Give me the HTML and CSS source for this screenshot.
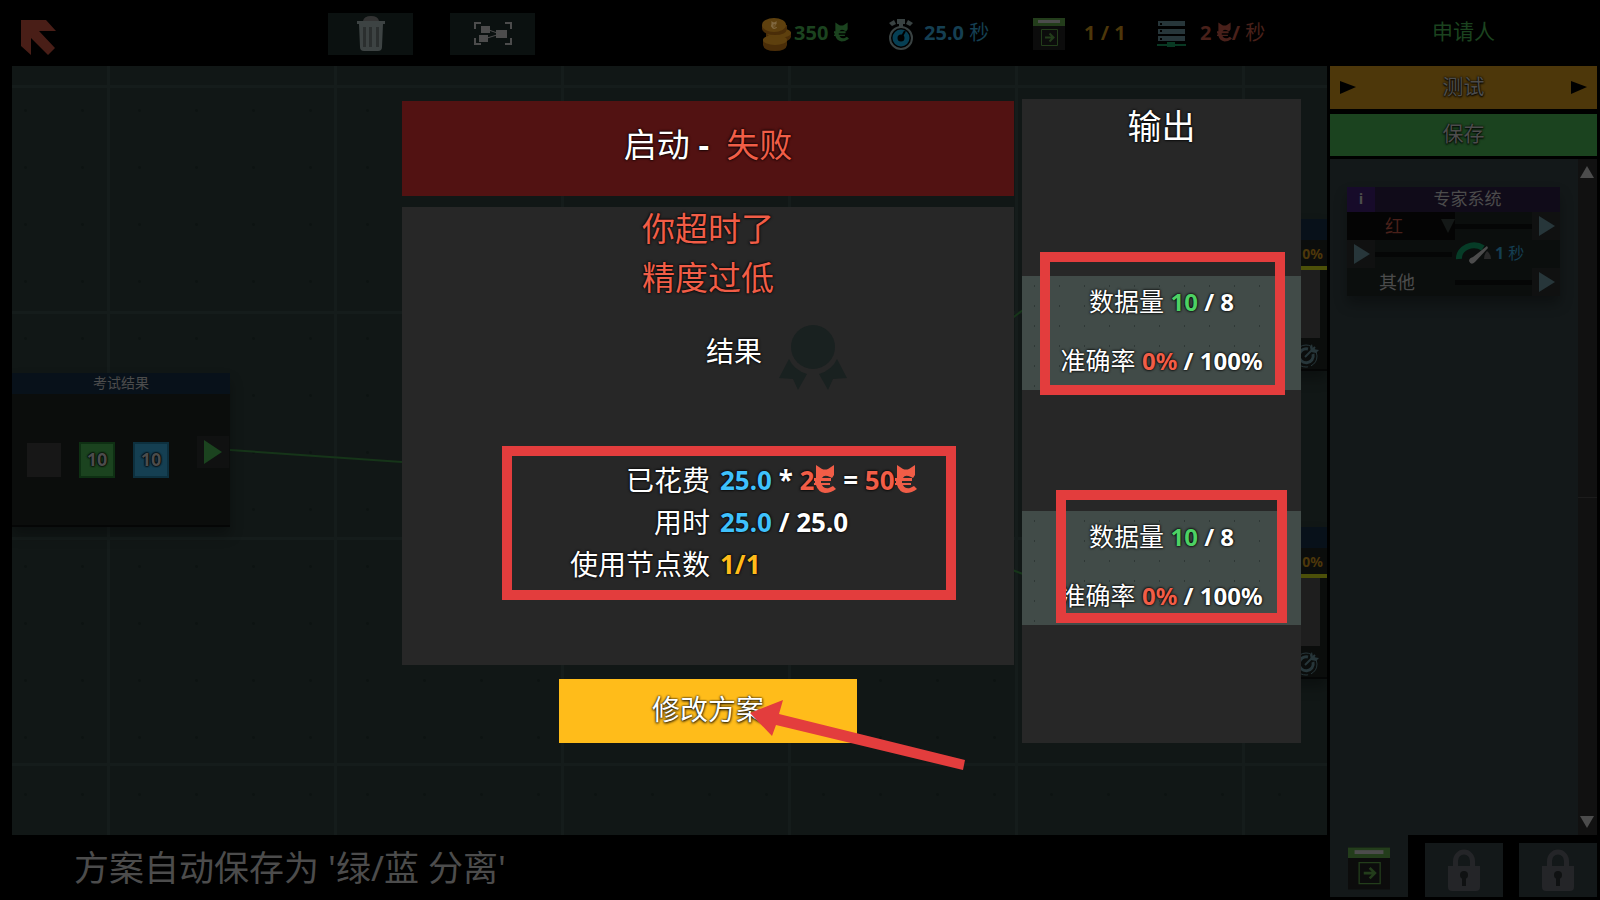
FILE: index.html
```
<!DOCTYPE html>
<html lang="zh-CN">
<head>
    <meta charset="UTF-8">
    <meta name="viewport" content="width=device-width, initial-scale=1.0">
    <title>启动 - 失败</title>
    <link rel="stylesheet" href="styles.css">
</head>
<body>
    <svg class="defs" aria-hidden="true">
        <symbol id="coin" viewBox="0 0 22 28">
            <path fill="currentColor" d="M2 0 L8 4 Q11 5 14 4 L20 0 L20 10 L18 13 L16 12 Q10 9 8 13 H17 V16 H7 V18 H16 V20 H8 Q10 24 15 23 L19 21 L22 24 Q17 28 11 28 Q4 27 2 20 H0 V18 H1 V16 H0 V13 H2 Q2 10 2 8 Z"/>
        </symbol>
        <symbol id="node" viewBox="0 0 32 32">
            <path fill="#0c0c0c" d="M0 0h32v32H0z"/>
            <path fill="#233d1b" d="M0 0h32v8H0z"/>
            <path fill="#4c4c4c" d="M5 2h22v3H5z"/>
            <path fill="none" stroke="#233d1b" d="M8.500 11.500h16v16h-16z"/>
            <path fill="none" stroke="#233d1b" stroke-width="2" d="M12 19.500h8M16.500 15.500l4 4-4 4"/>
        </symbol>
        <symbol id="lock" viewBox="0 0 32 42">
            <path fill="none" stroke="#242528" stroke-width="5" d="M7.500 20v-8a8.500 9 0 0 1 17 0v8"/>
            <path fill="#242528" d="M0 17h32v21q0 4-4 4H4q-4 0-4-4z"/>
            <circle cx="16" cy="26" r="4" fill="#0f1112"/>
            <path fill="#0f1112" d="M14 27h4v10h-4z"/>
        </symbol>
        <symbol id="target" viewBox="0 0 28 28">
            <circle cx="13" cy="15" r="11" fill="none" stroke="#27363a" stroke-width="1" stroke-dasharray="12 3"/>
            <path fill="none" stroke="#27363a" stroke-width="3" d="M15 8a7 7 0 1 0 5 5"/>
            <path fill="none" stroke="#27363a" stroke-width="2" d="M12 16L22 6"/>
            <path fill="#27363a" d="M19 3l1 5 6 1-3 3-5-1-1-5z"/>
        </symbol>
    </svg>

    <div class="game">
        <header class="topbar">
            <button class="back" type="button" aria-label="返回">
                <svg width="36" height="36" viewBox="0 0 36 36"><path fill="#491e17" d="M0 0h25l10 11H18l16 17-7 7-17-17v17L0 26z"/></svg>
            </button>
            <div class="tools">
                <button class="tool" type="button" aria-label="删除">
                    <svg width="30" height="36" viewBox="0 0 30 36">
                        <path fill="#333" d="M7 5q1-5 8-5t8 5z"/>
                        <path fill="#3d4343" d="M1 5h28v3H1zM3 8h24l-1 23q0 4-4 4H8q-4 0-4-4z"/>
                        <path fill="#2b2f2f" d="M7 11h3v20H7zM13 11h3v20h-3zM20 11h3v20h-3z"/>
                    </svg>
                </button>
                <button class="tool" type="button" aria-label="居中视图">
                    <svg width="38" height="24" viewBox="0 0 38 24">
                        <path fill="none" stroke="#4c4c4c" stroke-width="2" d="M1 7V1h6M31 1h6v6M37 16v6h-6M7 22H1v-6"/>
                        <path fill="none" stroke="#4c4c4c" d="M12 7l14 5-16 5"/>
                        <path fill="#4c4c4c" d="M7 4h9v7H7zM5 13h9v7H5zM22 8h11v8H22z"/>
                    </svg>
                </button>
            </div>
            <div class="stats">
                <span class="stat money green">
                    <svg width="29" height="33" viewBox="0 0 29 33">
                        <path fill="#4a2d08" d="M1 21h24v6q-1 6-12 6T1 27zM4 14h25v5q-1 5-12 5T4 20z"/>
                        <ellipse cx="13" cy="22" rx="12" ry="5" fill="#5e400e"/>
                        <ellipse cx="17" cy="15" rx="12" ry="5" fill="#5e400e"/>
                        <path fill="#4a2d08" d="M0 7h25v4q-1 6-12 6T0 11z"/>
                        <ellipse cx="12" cy="7" rx="12" ry="7" fill="#5e400e"/>
                        <use href="#coin" x="8" y="3" width="8" height="8" color="#806840"/>
                    </svg>
                    <span>350 <svg class="coin"><use href="#coin"/></svg></span>
                </span>
                <span class="stat time blue">
                    <svg width="26" height="33" viewBox="0 0 26 33">
                        <circle cx="13" cy="20" r="11" fill="none" stroke="#394242" stroke-width="2"/>
                        <circle cx="13" cy="20" r="6" fill="none" stroke="#063f54" stroke-width="5"/>
                        <path stroke="#000" stroke-width="2" d="M13 20l4-7"/>
                        <path fill="#394242" d="M9 1h8v5H9zM1 5l5-3 2 4-4 2zM25 5l-5-3-2 4 4 2zM11 6h4v3h-4z"/>
                    </svg>
                    <span>25.0 <span class="unit">秒</span></span>
                </span>
                <span class="stat nodes yellow">
                    <svg width="32" height="32"><use href="#node"/></svg>
                    <span>1 / 1</span>
                </span>
                <span class="stat cost red">
                    <svg width="29" height="28" viewBox="0 0 29 28">
                        <path fill="#27363a" d="M1 1h27v5H1zM1 9h27v5H1zM1 16h27v5H1z"/>
                        <path fill="#000" d="M3 3h2v2H3zM3 10h2v2H3zM3 18h2v2H3z"/>
                        <path fill="#083923" d="M0 24h29v2H0zM10 22h8v5h-8z"/>
                    </svg>
                    <span>2 <svg class="coin"><use href="#coin"/></svg>/ <span class="unit">秒</span></span>
                </span>
            </div>
            <div class="applicant green">申请人</div>
        </header>

        <main class="board">
            <svg class="wires" width="100%" height="100%">
                <path fill="none" stroke="#163519" stroke-width="2" d="M218 384L390 396M990 260L1011 244M990 500L1011 508"/>
            </svg>
            <section class="card source">
                <h3>考试结果</h3>
                <div class="card-body">
                    <span class="chip empty"></span>
                    <span class="chip chip-green">10</span>
                    <span class="chip chip-blue">10</span>
                    <span class="port"><svg width="18" height="24"><path fill="#1b431f" d="M0 0l18 12L0 24z"/></svg></span>
                </div>
            </section>
            <section class="card sink sink-top">
                <h3></h3>
                <div class="percent">0%</div>
                <div class="slot"></div>
                <svg class="target"><use href="#target"/></svg>
            </section>
            <section class="card sink sink-bottom">
                <h3></h3>
                <div class="percent">0%</div>
                <div class="slot"></div>
                <svg class="target"><use href="#target"/></svg>
            </section>
        </main>

        <aside class="sidebar">
            <button class="run" type="button">
                <svg width="16" height="13"><path d="M0 0l16 6L0 13z"/></svg>
                <span>测试</span>
                <svg width="16" height="13"><path d="M0 0l16 6L0 13z"/></svg>
            </button>
            <button class="save" type="button"><span>保存</span></button>
            <div class="library">
                <div class="library-list">
                    <section class="expert">
                        <h3><span class="info">i</span><span>专家系统</span></h3>
                        <div class="expert-row">
                            <div class="picker">
                                <select aria-label="颜色"><option>红</option></select>
                                <svg width="14" height="14"><path fill="#141817" d="M0 0h14L7 14z"/></svg>
                            </div>
                            <span class="rail"></span>
                            <span class="mini-port"></span>
                        </div>
                        <div class="expert-row">
                            <span class="mini-port"></span>
                            <span class="rail"></span>
                            <span class="speed blue">
                                <svg width="36" height="24" viewBox="0 0 36 24">
                                    <path fill="none" stroke="#063c27" stroke-width="6" d="M3 17a15 13 0 0 1 24-11"/>
                                    <path fill="#292929" d="M28 17q0-5 3-8 4 3 4 8z"/>
                                    <path fill="#4c4c4c" d="M31 4l1 2-13 14q-4 4-6-1 0-3 4-4z"/>
                                </svg>
                                <span><b>1</b> 秒</span>
                            </span>
                        </div>
                        <div class="expert-row">
                            <span class="other">其他</span>
                            <span class="rail"></span>
                            <span class="mini-port"></span>
                        </div>
                    </section>
                </div>
                <div class="scroll">
                    <svg width="14" height="12"><path fill="#4c4c4c" d="M7 0l7 12H0z"/></svg>
                    <svg width="14" height="12"><path fill="#4c4c4c" d="M0 0h14L7 12z"/></svg>
                </div>
            </div>
        </aside>

        <footer class="message">方案自动保存为 '绿/蓝 分离'</footer>
        <nav class="tabs">
            <button class="tab active" type="button" aria-label="节点"><svg width="42" height="43"><use href="#node"/></svg></button>
            <button class="tab" type="button" aria-label="未解锁"><svg width="32" height="42"><use href="#lock"/></svg></button>
            <button class="tab" type="button" aria-label="未解锁"><svg width="32" height="42"><use href="#lock"/></svg></button>
        </nav>
    </div>

    <div class="overlay" role="dialog" aria-label="启动 - 失败">
        <div class="report">
            <h1>启动 <b>-</b>&nbsp; <span class="bad">失败</span></h1>
            <div class="report-body">
                <p class="bad">你超时了<br>精度过低</p>
                <div class="result">
                    <h2>结果</h2>
                    <svg width="68" height="65" viewBox="0 0 68 65">
                        <g fill="#192120">
                            <circle cx="34" cy="22" r="22"/>
                            <path d="M10 34q5 11 18 15l-9 16-5-11-14-1zM58 34q-5 11-18 15l9 16 5-11 14-1z"/>
                        </g>
                    </svg>
                </div>
                <div class="summary">
                    <table>
                        <tr>
                            <th>已花费</th>
                            <td><span class="sky">25.0</span> * <span class="bad">2<svg class="coin"><use href="#coin"/></svg></span> = <span class="bad">50<svg class="coin"><use href="#coin"/></svg></span></td>
                        </tr>
                        <tr>
                            <th>用时</th>
                            <td><span class="sky">25.0</span> / 25.0</td>
                        </tr>
                        <tr>
                            <th>使用节点数</th>
                            <td class="gold">1/1</td>
                        </tr>
                    </table>
                </div>
            </div>
            <div class="action">
                <button class="modify" type="button">修改方案</button>
                <svg class="pointer" width="216" height="72" viewBox="0 0 216 72">
                    <path fill="#e33d3d" d="M0 13L33 0l-4 14 186 46-2 10-187-45-4 11z"/>
                </svg>
            </div>
        </div>
        <section class="outputs">
            <h2>输出</h2>
            <div class="output">
                <p>数据量 <b><span class="good">10</span> / 8</b></p>
                <p>准确率 <b><span class="bad">0%</span> / 100%</b></p>
                <span class="mark mark-first"></span>
            </div>
            <div class="output">
                <p>数据量 <b><span class="good">10</span> / 8</b></p>
                <p>准确率 <b><span class="bad">0%</span> / 100%</b></p>
                <span class="mark mark-second"></span>
            </div>
        </section>
    </div>
</body>
</html>
```

FILE: styles.css
```
* {
    box-sizing: border-box;
}

body {
    margin: 0;
    background: #000;
    color: #4c4c4c;
    font-family: "Noto Sans", "Noto Sans CJK SC", sans-serif;
    font-size: 20px;
    overflow: hidden;
}

h1, h2, h3, p {
    margin: 0;
    font-weight: normal;
}

button {
    border: none;
    padding: 0;
    color: inherit;
    font: inherit;
    cursor: pointer;
}

svg {
    flex: none;
}

.defs {
    position: absolute;
    width: 0;
    height: 0;
}

.green { color: #1b431f; }
.blue { color: #153f52; }
.yellow { color: #4d370a; }
.red { color: #49201a; }
.good { color: #4dd164; }
.bad { color: #f15d47; }
.sky { color: #3fc1fc; }
.gold { color: #ffbc1a; }

.game {
    display: grid;
    grid-template-columns: minmax(0, 1fr) 267px;
    grid-template-rows: 66px 1fr 65px;
    column-gap: 3px;
    height: 100vh;
    padding: 0 3px 0 12px;
}

/* top bar */
.topbar {
    grid-column: 1 / 3;
    display: flex;
    align-items: center;
}

.back {
    display: flex;
    margin: 10px 0 0 9px;
    background: none;
}

.tools {
    display: flex;
    gap: 37px;
    margin: 2px 0 0 271px;
}

.tool {
    display: flex;
    align-items: center;
    justify-content: center;
    width: 85px;
    height: 42px;
    background: #0b1110;
}

.stats {
    display: flex;
    margin: 2px 0 0 227px;
    font-weight: bold;
    line-height: 28px;
    white-space: nowrap;
}

.stat {
    display: flex;
    align-items: center;
}

.stat > span {
    padding-bottom: 3px;
}

.stat .coin {
    width: 15px;
    height: 20px;
    vertical-align: -2px;
}

.unit {
    font-weight: normal;
}

.money { width: 126px; gap: 3px; }
.time { width: 145px; gap: 10px; }
.nodes { width: 124px; gap: 19px; }
.cost { gap: 14px; }

.applicant {
    width: 267px;
    margin-left: auto;
    padding-bottom: 7px;
    font-size: 21px;
    text-align: center;
}

/* board */
.board {
    position: relative;
    overflow: hidden;
    background-color: #111716;
    background-image:
        linear-gradient(#151c1b 3px, transparent 3px),
        linear-gradient(90deg, #151c1b 3px, transparent 3px),
        radial-gradient(circle, #0d1312 1px, transparent 2px);
    background-size: 226px 226px, 227px 227px, 57px 57px;
    background-position: 0 19px, 95px 0, 42px 16px;
}

.wires {
    position: absolute;
    inset: 0;
}

.card {
    position: absolute;
    background: #0b0d0c;
    box-shadow: 0 8px 12px rgba(0, 0, 0, 0.3);
}

.card h3 {
    height: 21px;
    background: #08111a;
    font-size: 14px;
    line-height: 20px;
    text-align: center;
}

.source {
    left: 0;
    top: 307px;
    width: 218px;
    height: 154px;
    border-bottom: 2px solid #050606;
}

.card-body {
    display: flex;
    align-items: center;
    padding: 40px 0 0 15px;
}

.chip {
    width: 36px;
    height: 36px;
    margin: 8px 18px 0 0;
    border: 2px solid #0e3013;
    font-size: 18px;
    font-weight: bold;
    line-height: 30px;
    text-align: center;
    text-shadow: 0 0 2px #000, 0 0 2px #000, 0 0 2px #000;
}

.empty {
    width: 34px;
    height: 34px;
    border: none;
    background: #171717;
}

.chip-green {
    background: #1b431f;
}

.chip-blue {
    margin-right: 28px;
    background: #153f52;
    border-color: #0d303f;
}

.port {
    display: flex;
    align-items: center;
    justify-content: center;
    width: 32px;
    height: 32px;
    margin-bottom: 8px;
    background: #101111;
}

.sink {
    right: 0;
    width: 60px;
    height: 152px;
    border-bottom: 2px solid #050606;
}

.sink-top { top: 153px; }
.sink-bottom { top: 461px; }

.percent {
    height: 30px;
    padding-right: 4px;
    border-bottom: 4px solid #4c5009;
    color: #4d370a;
    font-size: 14px;
    font-weight: bold;
    line-height: 27px;
    text-align: right;
}

.slot {
    height: 68px;
    margin: 0 7px 3px 0;
    background: #1e1e1e;
}

.target {
    display: block;
    width: 28px;
    height: 28px;
    margin-left: 26px;
}

/* sidebar */
.sidebar {
    display: flex;
    flex-direction: column;
}

.run,
.save {
    display: flex;
    align-items: center;
    height: 43px;
    padding: 0 10px;
    font-size: 21px;
    line-height: 38px;
    text-shadow: 0 0 2px #000, 0 1px 2px #000;
}

.run span,
.save span {
    padding-bottom: 4px;
}

.run {
    justify-content: space-between;
    background: #4d370a;
}

.save {
    height: 42px;
    justify-content: center;
    margin: 5px 0 3px;
    background: #1b431f;
}

.library {
    display: flex;
    flex: 1;
    background: #131819;
}

.library-list {
    flex: 1;
    padding: 28px 18px 0 17px;
}

.scroll {
    display: flex;
    flex-direction: column;
    align-items: flex-start;
    justify-content: space-between;
    width: 19px;
    padding: 7px 2px;
    background: linear-gradient(#111 338px, #1c1c1c 338px, #1c1c1c 339px, #111 339px);
}

.expert {
    background: #0b0e0d;
    box-shadow: 0 8px 12px rgba(0, 0, 0, 0.3);
    font-size: 18px;
}

.expert h3 {
    display: grid;
    grid-template-columns: 28px 1fr;
    height: 25px;
    background: #100b19;
    font-size: 17px;
    line-height: 23px;
    text-align: center;
}

.info {
    background: #170b2a;
    font-size: 15px;
    font-weight: bold;
}

.expert-row {
    display: flex;
    align-items: center;
    height: 28px;
}

.picker {
    display: flex;
    align-items: center;
    width: 108px;
    height: 28px;
    background: #040404;
}

.picker select {
    flex: 1;
    border: none;
    background: none;
    appearance: none;
    color: #49201a;
    font: inherit;
    line-height: 24px;
    text-align: center;
}

.rail {
    width: 77px;
    height: 5px;
    background: #050606;
}

.mini-port {
    width: 28px;
    height: 28px;
    background: #101111;
}

.mini-port::before {
    content: "";
    display: block;
    width: 16px;
    height: 20px;
    margin: 4px 0 0 7px;
    background: #27363a;
    clip-path: polygon(0 0, 100% 50%, 0 100%);
}

.speed {
    display: flex;
    align-items: center;
    gap: 3px;
    margin-left: 4px;
    font-size: 16px;
    line-height: 24px;
}

.speed span {
    padding-bottom: 2px;
}

.other {
    width: 108px;
    padding-right: 8px;
    line-height: 26px;
    text-align: center;
}

/* bottom */
.message {
    padding-left: 62px;
    font-size: 35px;
    line-height: 65px;
}

.tabs {
    display: flex;
    align-items: flex-start;
    justify-content: space-between;
}

.tab {
    display: flex;
    align-items: center;
    justify-content: center;
    width: 78px;
    height: 54px;
    margin-top: 8px;
    background: #131819;
}

.tab.active {
    height: 62px;
    margin-top: 0;
    padding-top: 5px;
}

/* launch report */
.overlay {
    position: absolute;
    inset: 0;
    display: grid;
    grid-template-columns: minmax(0, 1fr) 279px;
    align-items: start;
    gap: 8px;
    padding: 99px 299px 0 402px;
    color: #fff;
    text-shadow: 0 0 2px #000, 0 0 3px #000;
}

.report h1 {
    height: 95px;
    margin: 2px 0 11px;
    background: #521212;
    font-size: 33px;
    line-height: 88px;
    text-align: center;
}

.report-body {
    height: 458px;
    background: #272727;
}

.report-body p {
    height: 98px;
    font-size: 33px;
    line-height: 49px;
    text-align: center;
    margin-top: -3px;
}

.report-body::before {
    content: "";
    display: table;
}

.result {
    display: flex;
    align-items: center;
    gap: 17px;
    padding: 23px 0 0 304px;
}

.result h2 {
    padding-bottom: 14px;
    font-size: 28px;
    line-height: 40px;
}

.summary {
    width: 454px;
    height: 154px;
    margin: 56px 0 0 100px;
    border: 10px solid #e33d3d;
    padding: 3px 0;
}

.summary table {
    border-collapse: collapse;
    font-size: 28px;
    line-height: 42px;
}

.summary th {
    width: 198px;
    padding: 0;
    font-weight: normal;
    text-align: right;
}

.summary td {
    padding: 0 0 0 10px;
    font-size: 26px;
    font-weight: bold;
    white-space: nowrap;
}

.summary .coin {
    width: 22px;
    height: 28px;
    vertical-align: -3px;
}

.action {
    position: relative;
    width: 298px;
    margin: 14px auto 0;
}

.modify {
    display: block;
    width: 100%;
    height: 64px;
    padding-bottom: 4px;
    background: #ffbc1a;
    color: #fff;
    font-size: 28px;
    line-height: 60px;
    text-shadow: 0 0 2px #000, 0 1px 3px #000;
}

.pointer {
    position: absolute;
    left: 191px;
    top: 21px;
}

.outputs {
    height: 644px;
    background: #272727;
}

.outputs h2 {
    height: 177px;
    font-size: 34px;
    line-height: 55px;
    text-align: center;
}

.output {
    position: relative;
    height: 114px;
    margin-bottom: 121px;
    background: radial-gradient(circle, #2f3836 1px, transparent 1px) 0 0 / 25px 20px #414b48;
    font-size: 25px;
    line-height: 50px;
    text-align: center;
    white-space: nowrap;
}

.output p + p {
    padding-top: 8px;
}

.output b {
    font-size: 24px;
}

.mark {
    position: absolute;
    border: 10px solid #e33d3d;
}

.mark-first {
    inset: -24px 16px -5px 18px;
}

.mark-second {
    inset: -21px 14px 2px 34px;
}
```
